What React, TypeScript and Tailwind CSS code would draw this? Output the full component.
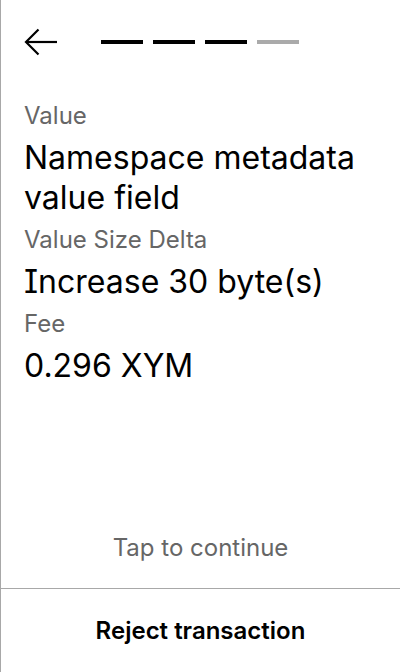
import React from "react";

function BackArrow() {
  return (
    <svg width="34" height="28" viewBox="0 0 34 28" fill="none" className="block">
      <path d="M33 14H2" stroke="#000" strokeWidth="2.2" />
      <path d="M14.5 1.5L2 14l12.5 12.5" stroke="#000" strokeWidth="2.2" strokeLinejoin="miter" />
    </svg>
  );
}

function Item({ label, value }: { label: string; value: string }) {
  return (
    <div className="flex flex-col">
      <div className="text-[24px] leading-[44px] text-[#666666]">{label}</div>
      <div className="text-[32px] leading-[40px] text-black">{value}</div>
    </div>
  );
}

export default function App() {
  return (
    <div className="flex h-[672px] w-[400px] flex-col border-l border-[#a8a8a8] bg-white font-['Inter',sans-serif] [font-feature-settings:'cv08']">
      <div className="flex h-[84px] items-center pl-[23px] pr-6">
        <BackArrow />
        <div className="ml-[43px] flex gap-[10px]">
          <div className="h-1 w-[42px] bg-black" />
          <div className="h-1 w-[42px] bg-black" />
          <div className="h-1 w-[42px] bg-black" />
          <div className="h-1 w-[42px] bg-[#aaaaaa]" />
        </div>
      </div>
      <div className="flex flex-col pl-[23px] pr-4 pt-[10px]">
        <Item label="Value" value="Namespace metadata value field" />
        <Item label="Value Size Delta" value="Increase 30 byte(s)" />
        <Item label="Fee" value="0.296 XYM" />
      </div>
      <div className="flex-1" />
      <div className="flex h-[84px] items-center justify-center pt-1 text-[24px] text-[#666666]">
        Tap to continue
      </div>
      <div className="flex h-[84px] items-center justify-center border-t border-[#a8a8a8] text-[24px] font-semibold text-black">
        Reject transaction
      </div>
    </div>
  );
}
